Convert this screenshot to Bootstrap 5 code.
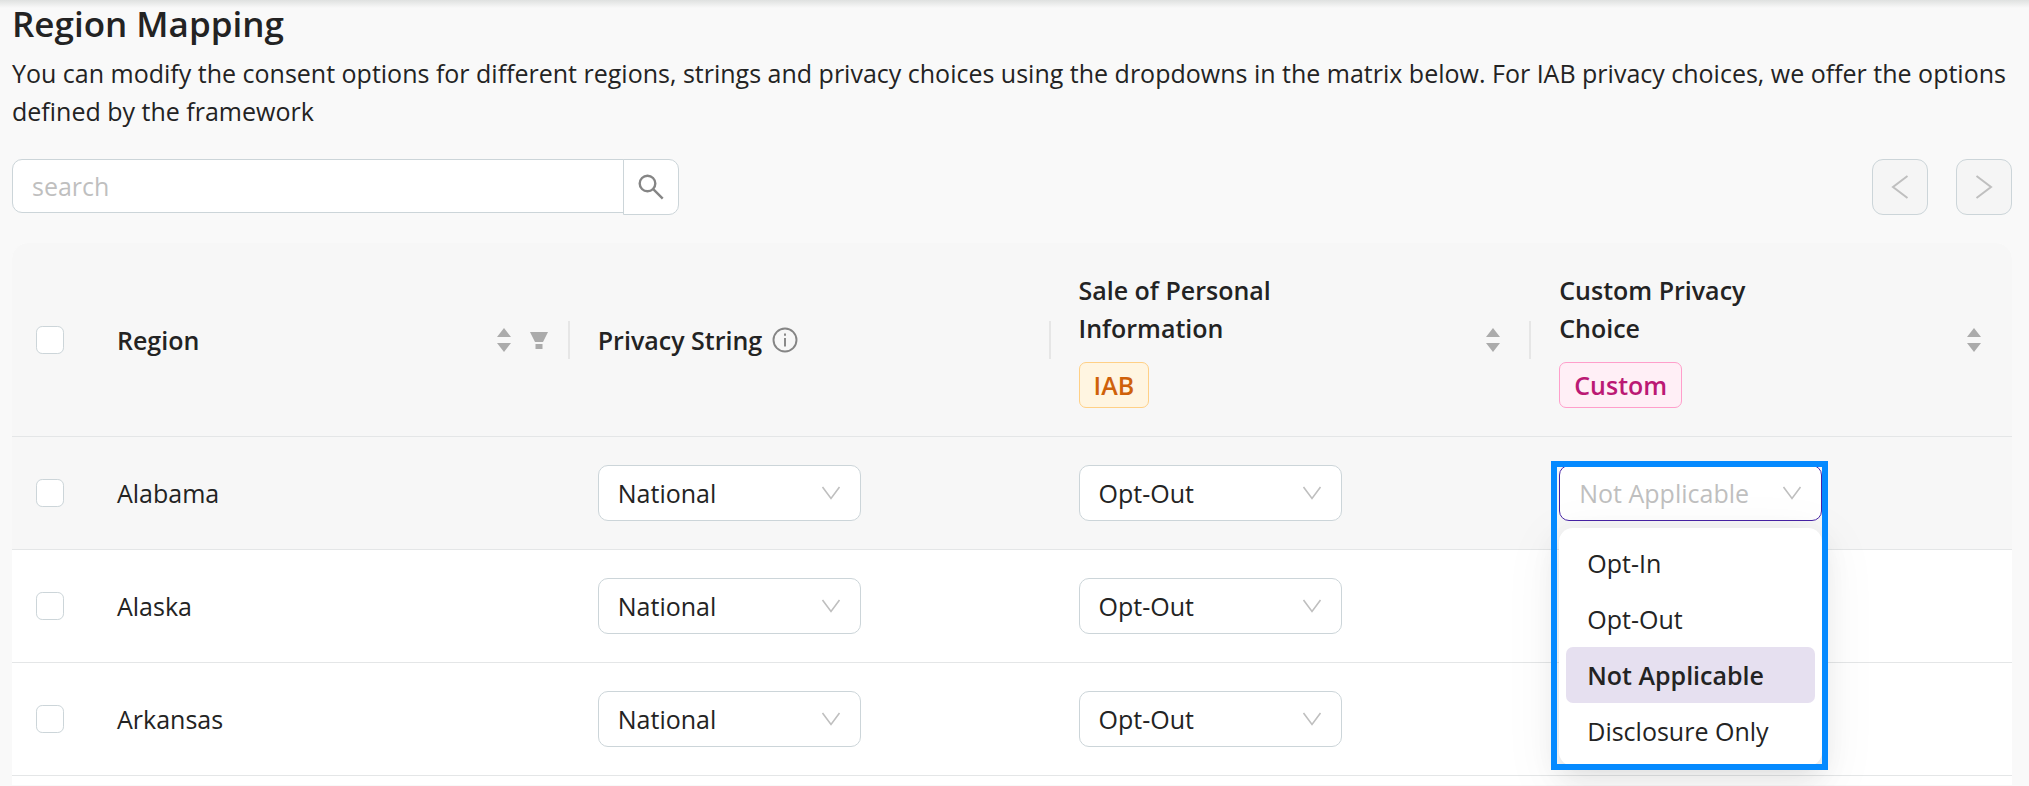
<!DOCTYPE html>
<html lang="en">
<head>
<meta charset="utf-8">
<meta name="viewport" content="width=device-width, initial-scale=1">
<title>Region Mapping</title>
<link href="https://cdn.jsdelivr.net/npm/bootstrap@5.3.0/dist/css/bootstrap.min.css" rel="stylesheet">
<style>
:root { --ink: #232323; --line: #e4e6e7; --edge: #ccd5d9; --mute: #bfbfbf; }
body { background: #f9f9f9; color: var(--ink); font-family: "Open Sans", sans-serif; font-size: 25px; line-height: 38px; }
.page { padding: 0 17px 0 12px; background: linear-gradient(#dfe1e0, #f9f9f9) top / 100% 8px no-repeat; }
h1 { font-size: 35px; line-height: 48px; font-weight: 600; }
.intro { margin: 6px 0 29px; }
.toolbar { margin-bottom: 28px; }
.search { width: 667px; max-width: 70%; }
.search .form-control { height: 54px; padding: 0 19px; border-color: var(--edge); border-radius: 10px 0 0 10px; font-size: inherit; line-height: 38px; color: var(--ink); }
.search .form-control::placeholder { color: var(--mute); }
.search .btn { width: 56px; height: 56px; margin-left: -1px; padding: 0; border-color: var(--edge); border-radius: 0 10px 10px 0; background: #fff; color: #858585; }
.pager { gap: 28px; }
.pager .btn { width: 56px; height: 56px; padding: 0; border-color: var(--edge); border-radius: 11px; background: #f5f5f5; color: var(--mute); opacity: 1; }
.matrix { background: #fff; border-radius: 16px 16px 0 0; }
.matrix table { table-layout: fixed; --bs-table-bg: transparent; --bs-table-color: var(--ink); }
.matrix th, .matrix td { padding: 28px; border-bottom: 1px solid var(--line); vertical-align: middle; }
.matrix thead th { background: #f7f7f7; font-weight: 600; position: relative; }
.matrix thead th:first-child { border-top-left-radius: 16px; }
.matrix thead th:last-child { border-top-right-radius: 16px; }
.matrix thead .ruled::after { content: ""; position: absolute; right: 0; top: 50%; width: 2px; height: 38px; margin-top: -19px; background: #e6e6e6; }
.matrix .pick { width: 77px; padding: 0 24px; }
.active-row td { background: #f7f7f7; }
.form-check-input { width: 28px; height: 28px; margin: 0; border-color: var(--edge); border-radius: 7px; }
.heading { width: 220px; }
.sorter { padding: 0; border: 0; background: none; line-height: 0; }
.tools { gap: 17px; margin-right: -7px; }
.lone { margin-right: 2px; }
.tag { width: fit-content; margin-top: 15px; padding: 0 14px; border: 1px solid; border-radius: 7px; line-height: 44px; }
.tag-iab { background: #fff5e1; border-color: #ffd086; color: #cf610a; }
.tag-custom { background: #ffeff6; border-color: #ff9fcb; color: #bb1974; }
.choice { width: 263px; }
.choice .form-select { height: 56px; padding: 0 50px 0 19px; border-color: var(--edge); border-radius: 10px; font-size: inherit; line-height: 38px; color: var(--ink); background: #fff url("data:image/svg+xml,%3Csvg xmlns='http://www.w3.org/2000/svg' viewBox='0 0 20 14'%3E%3Cpath d='M1.500 1 10 12.500 18.500 1' fill='none' stroke='%23bfbfbf' stroke-width='1.600'/%3E%3C/svg%3E") no-repeat right 19px top 20px / 20px 14px; }
.choice .form-select.opened { border-color: #4824a6; color: var(--mute); }
.menu { position: absolute; top: 63px; left: 0; width: 263px; padding: 7px; background: #fff; border-radius: 14px; box-shadow: 0 11px 29px rgba(0,0,0,.09), 0 5px 12px -8px rgba(0,0,0,.12), 0 16px 52px 14px rgba(0,0,0,.04); z-index: 2; }
.menu button { display: block; width: 100%; height: 56px; padding: 0 21px; border: 0; border-radius: 7px; background: none; color: inherit; text-align: left; white-space: nowrap; }
.menu .chosen { background: #e6e0f0; font-weight: 600; }
.marker { position: absolute; top: -4px; left: -8px; width: 277px; height: 309px; border: 6px solid #058aff; z-index: 3; pointer-events: none; }
.next-row { height: 9px; }
svg { display: block; }
</style>
</head>
<body>
<main class="page min-vh-100 overflow-hidden">
  <h1 class="m-0">Region Mapping</h1>
  <p class="intro">You can modify the consent options for different regions, strings and privacy choices using the dropdowns in the matrix below. For IAB privacy choices, we offer the options defined by the framework</p>
  <div class="toolbar d-flex justify-content-between align-items-start">
    <form class="search d-flex align-items-start" role="search">
      <input class="form-control shadow-none" type="text" placeholder="search" aria-label="Search regions">
      <button class="btn flex-shrink-0 d-flex align-items-center justify-content-center" type="button" aria-label="Search"><svg width="26" height="26" viewBox="0 0 26 26" fill="none" stroke="currentColor" stroke-width="2.400"><circle cx="9.500" cy="9.500" r="7.800"/><path d="m15.200 15.200 9.500 9.500"/></svg></button>
    </form>
    <div class="pager d-flex">
      <button class="btn d-flex align-items-center justify-content-center" type="button" disabled aria-label="Previous"><svg width="18" height="24" viewBox="0 0 18 24" fill="none" stroke="currentColor" stroke-width="2"><path d="M16.500 1 2 12l14.500 11"/></svg></button>
      <button class="btn d-flex align-items-center justify-content-center" type="button" disabled aria-label="Next"><svg width="18" height="24" viewBox="0 0 18 24" fill="none" stroke="currentColor" stroke-width="2"><path d="M1.500 1 16 12 1.500 23"/></svg></button>
    </div>
  </div>
  <div class="matrix">
    <table class="table m-0">
      <thead>
        <tr>
          <th class="pick"><input class="form-check-input d-block" type="checkbox" aria-label="Select all regions"></th>
          <th class="ruled"><div class="d-flex align-items-center justify-content-between"><span>Region</span><span class="tools d-flex align-items-center">
            <button class="sorter" type="button" aria-label="Sort by region"><svg width="16" height="26" viewBox="0 0 16 26" fill="#ababab"><path d="M8 1l7 9H1zM8 25l7-9H1z"/></svg></button>
            <button class="sorter" type="button" aria-label="Filter regions"><svg width="20" height="20" viewBox="0 0 20 20" fill="#ababab"><path d="M1 2h18l-5 10H6zM6.500 14h7v5h-7z"/></svg></button></span></div></th>
          <th class="ruled"><div class="d-flex align-items-center"><span>Privacy String</span><svg class="ms-2" width="30" height="26" viewBox="0 0 30 26" fill="none" stroke="#858585" stroke-width="1.900"><circle cx="15" cy="13" r="11.500"/><path d="M15 11v8.500M15 6.500v2.300"/></svg></div></th>
          <th class="ruled"><div class="d-flex align-items-center justify-content-between"><div class="heading">Sale of Personal Information<div class="tag tag-iab">IAB</div></div>
            <button class="sorter lone" type="button" aria-label="Sort by sale of personal information"><svg width="16" height="26" viewBox="0 0 16 26" fill="#ababab"><path d="M8 1l7 9H1zM8 25l7-9H1z"/></svg></button></div></th>
          <th><div class="d-flex align-items-center justify-content-between"><div class="heading">Custom Privacy Choice<div class="tag tag-custom">Custom</div></div>
            <button class="sorter lone" type="button" aria-label="Sort by custom privacy choice"><svg width="16" height="26" viewBox="0 0 16 26" fill="#ababab"><path d="M8 1l7 9H1zM8 25l7-9H1z"/></svg></button></div></th>
        </tr>
      </thead>
      <tbody>
        <tr class="active-row">
          <td class="pick"><input class="form-check-input d-block" type="checkbox" aria-label="Select Alabama"></td>
          <td>Alabama</td>
          <td><div class="choice"><select class="form-select shadow-none" aria-label="Alabama privacy string"><option>National</option></select></div></td>
          <td><div class="choice"><select class="form-select shadow-none" aria-label="Alabama sale of personal information"><option>Opt-Out</option></select></div></td>
          <td><div class="choice position-relative">
            <select class="form-select shadow-none opened" aria-label="Alabama custom privacy choice"><option>Not Applicable</option></select>
            <div class="menu" role="listbox" aria-label="Custom privacy choice options">
              <button type="button" role="option">Opt-In</button>
              <button type="button" role="option">Opt-Out</button>
              <button type="button" role="option" class="chosen" aria-selected="true">Not Applicable</button>
              <button type="button" role="option">Disclosure Only</button>
            </div>
            <div class="marker"></div>
          </div></td>
        </tr>
        <tr>
          <td class="pick"><input class="form-check-input d-block" type="checkbox" aria-label="Select Alaska"></td>
          <td>Alaska</td>
          <td><div class="choice"><select class="form-select shadow-none" aria-label="Alaska privacy string"><option>National</option></select></div></td>
          <td><div class="choice"><select class="form-select shadow-none" aria-label="Alaska sale of personal information"><option>Opt-Out</option></select></div></td>
          <td></td>
        </tr>
        <tr>
          <td class="pick"><input class="form-check-input d-block" type="checkbox" aria-label="Select Arkansas"></td>
          <td>Arkansas</td>
          <td><div class="choice"><select class="form-select shadow-none" aria-label="Arkansas privacy string"><option>National</option></select></div></td>
          <td><div class="choice"><select class="form-select shadow-none" aria-label="Arkansas sale of personal information"><option>Opt-Out</option></select></div></td>
          <td></td>
        </tr>
      </tbody>
    </table>
    <div class="next-row"></div>
  </div>
</main>
<script src="https://cdn.jsdelivr.net/npm/bootstrap@5.3.0/dist/js/bootstrap.bundle.min.js"></script>
</body>
</html>
